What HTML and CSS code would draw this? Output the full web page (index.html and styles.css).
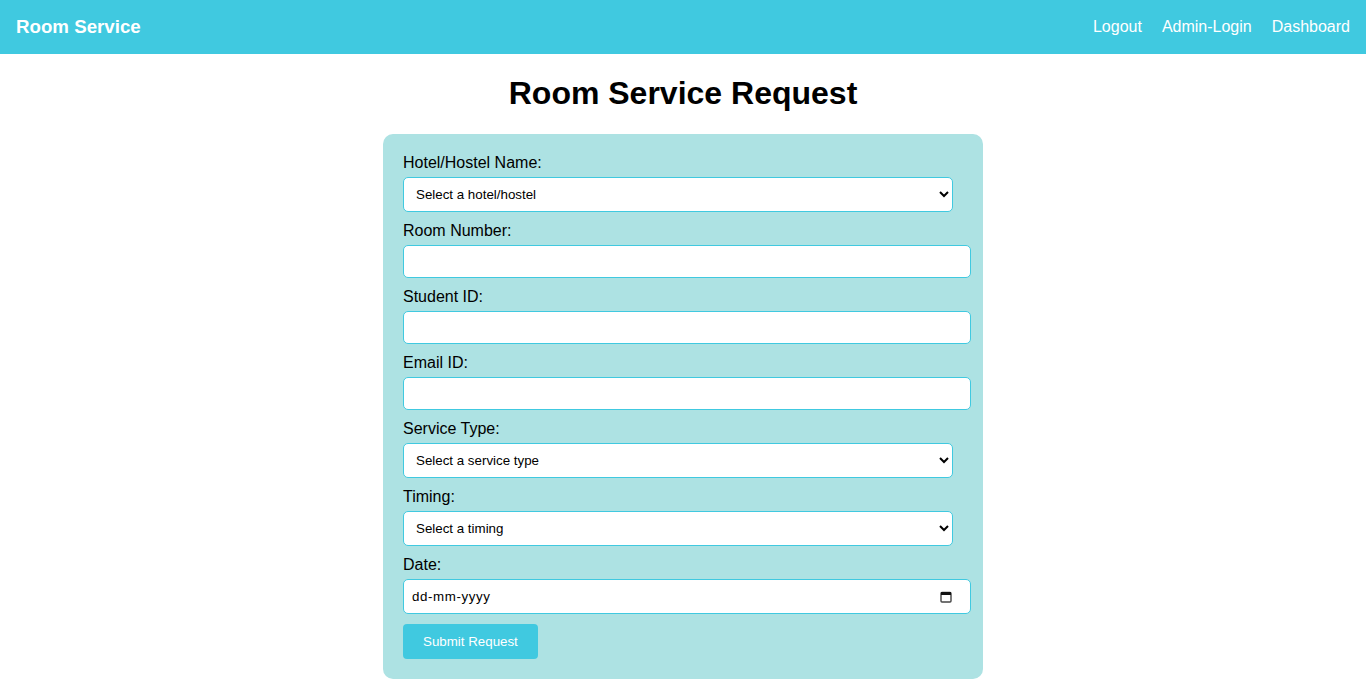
FILE: index.html
```html
<!DOCTYPE html>
<html lang="en">
<head>
<meta charset="utf-8">
<title>Room Service</title>
<link rel="stylesheet" href="styles.css">
</head>
<body>
<nav class="navbar">
  <div class="brand">Room Service</div>
  <div class="nav-links">
    <a href="#">Logout</a>
    <a href="#">Admin-Login</a>
    <a href="#">Dashboard</a>
  </div>
</nav>
<h1 class="title">Room Service Request</h1>
<form class="request-form">
  <label for="hotel">Hotel/Hostel Name:</label>
  <select id="hotel" class="field select"><option>Select a hotel/hostel</option></select>
  <label for="room">Room Number:</label>
  <input id="room" class="field text" type="text">
  <label for="student">Student ID:</label>
  <input id="student" class="field text" type="text">
  <label for="email">Email ID:</label>
  <input id="email" class="field text" type="text">
  <label for="service">Service Type:</label>
  <select id="service" class="field select"><option>Select a service type</option></select>
  <label for="timing">Timing:</label>
  <select id="timing" class="field select"><option>Select a timing</option></select>
  <label for="date">Date:</label>
  <div class="date-wrap">
    <input id="date" class="field date" type="text" placeholder="dd-mm-yyyy">
    <svg class="cal-icon" width="12" height="12" viewBox="0 0 12 12"><rect x="1" y="1.5" width="10" height="9.5" fill="none" stroke="#444" stroke-width="1.4" rx="1"/><rect x="1" y="1" width="10" height="3" fill="#111"/></svg>
  </div>
  <button type="button" class="submit">Submit Request</button>
</form>
</body>
</html>
```
FILE: styles.css
```css
body {
  margin: 0;
  font-family: "Liberation Sans", Arial, sans-serif;
  background: #fff;
  color: #000;
}
.navbar {
  height: 54px;
  background: #40c9e0;
  display: flex;
  align-items: center;
  justify-content: space-between;
  padding: 0 16px;
  color: #fff;
}
.brand {
  font-size: 18.72px;
  font-weight: bold;
}
.nav-links {
  display: flex;
  gap: 20px;
}
.nav-links a {
  color: #fff;
  text-decoration: none;
  font-size: 16px;
}
.title {
  text-align: center;
  font-size: 32px;
  margin: 21.44px 0;
}
.request-form {
  width: 560px;
  margin: 0 auto;
  padding: 20px;
  background: #ade2e3;
  border-radius: 10px;
}
.request-form label {
  display: block;
  font-size: 16px;
  margin-bottom: 5px;
}
.field {
  display: block;
  width: calc(100% - 10px);
  padding: 8px;
  border: 1px solid #40c9e0;
  border-radius: 5px;
  margin: 0 0 10px;
  font-family: "Liberation Sans", Arial, sans-serif;
  font-size: 13.33px;
  background: #fff;
  color: #000;
}
.select {
  height: 35px;
  padding: 0 8px;
}
.text {
  height: 15px;
}
.date-wrap {
  position: relative;
}
.date {
  height: 17px;
  letter-spacing: 0.6px;
  margin-bottom: 10px;
}
.date::placeholder {
  color: #000;
  opacity: 1;
}
.cal-icon {
  position: absolute;
  right: 11px;
  top: 12px;
}
.submit {
  display: block;
  background: #40c9e0;
  color: #fff;
  border: none;
  border-radius: 4px;
  padding: 10px 20px;
  font-family: "Liberation Sans", Arial, sans-serif;
  font-size: 13.33px;
  margin-top: 10px;
}
```
